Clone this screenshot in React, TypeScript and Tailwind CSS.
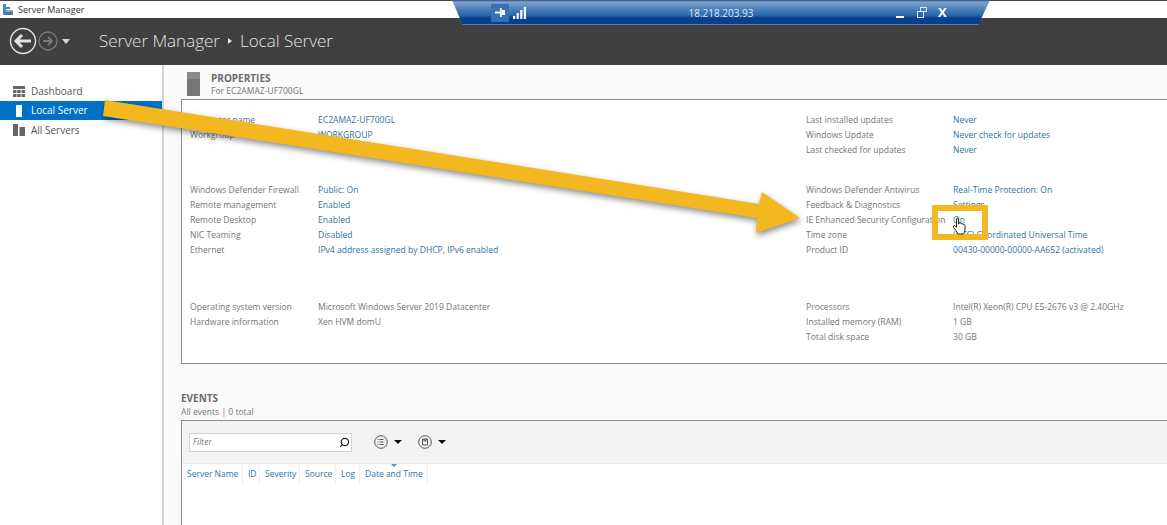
import { Search } from 'lucide-react';

const font = 'font-["Open_Sans","Noto_Sans",sans-serif]';

type Row = { label: string; value: string; plain?: boolean };

const leftGroups: Row[][] = [
  [
    { label: 'Computer name', value: 'EC2AMAZ-UF700GL' },
    { label: 'Workgroup', value: 'WORKGROUP' },
  ],
  [
    { label: 'Windows Defender Firewall', value: 'Public: On' },
    { label: 'Remote management', value: 'Enabled' },
    { label: 'Remote Desktop', value: 'Enabled' },
    { label: 'NIC Teaming', value: 'Disabled' },
    { label: 'Ethernet', value: 'IPv4 address assigned by DHCP, IPv6 enabled' },
  ],
  [
    { label: 'Operating system version', value: 'Microsoft Windows Server 2019 Datacenter', plain: true },
    { label: 'Hardware information', value: 'Xen HVM domU', plain: true },
  ],
];

const rightGroups: Row[][] = [
  [
    { label: 'Last installed updates', value: 'Never' },
    { label: 'Windows Update', value: 'Never check for updates' },
    { label: 'Last checked for updates', value: 'Never' },
  ],
  [
    { label: 'Windows Defender Antivirus', value: 'Real-Time Protection: On' },
    { label: 'Feedback & Diagnostics', value: 'Settings' },
    { label: 'IE Enhanced Security Configuration', value: 'On' },
    { label: 'Time zone', value: '(UTC) Coordinated Universal Time' },
    { label: 'Product ID', value: '00430-00000-00000-AA652 (activated)' },
  ],
  [
    { label: 'Processors', value: 'Intel(R) Xeon(R) CPU E5-2676 v3 @ 2.40GHz', plain: true },
    { label: 'Installed memory (RAM)', value: '1 GB', plain: true },
    { label: 'Total disk space', value: '30 GB', plain: true },
  ],
];

function PropertyColumn({ groups, labelWidth, firstGap, secondGap, className }: {
  groups: Row[][]; labelWidth: string; firstGap: string; secondGap: string; className: string;
}) {
  return (
    <div className={className}>
      {groups.map((group, i) => (
        <div key={i} className={i === 1 ? firstGap : i === 2 ? secondGap : ''}>
          {group.map((row) => (
            <div key={row.label} className="flex h-[15px] items-center text-[8.55px] whitespace-nowrap">
              <span className={`${labelWidth} shrink-0 text-[#757575]`}>{row.label}</span>
              <span className={row.plain ? 'text-[#757575]' : 'text-[#2f739f]'}>{row.value}</span>
            </div>
          ))}
        </div>
      ))}
    </div>
  );
}

function DashboardIcon() {
  return (
    <svg width="12" height="11" viewBox="0 0 12 11" fill="#666">
      <rect width="12" height="3" />
      <rect y="4" width="3.5" height="3" /><rect x="4.2" y="4" width="3.5" height="3" /><rect x="8.5" y="4" width="3.5" height="3" />
      <rect y="8" width="3.5" height="3" /><rect x="4.2" y="8" width="3.5" height="3" /><rect x="8.5" y="8" width="3.5" height="3" />
    </svg>
  );
}

function ColumnHeader({ label, width }: { label: string; width: string }) {
  return (
    <div className={`${width} flex h-[21px] items-center border-r border-[#eeeeee] pl-[5px] whitespace-nowrap`}>
      {label}
    </div>
  );
}

export default function App() {
  return (
    <div className={`${font} relative flex h-[525px] w-[1167px] flex-col overflow-hidden bg-white`}>
      {/* window title */}
      <div className="flex h-[18px] shrink-0 items-center gap-[5px] border-t border-[#444] pl-[3px] text-[9px] text-[#333]">
        <svg width="10" height="11" viewBox="0 0 10 11">
          <rect x="0" y="0" width="3" height="11" fill="#3d8ccb" />
          <rect x="3" y="3" width="4" height="2" fill="#3d8ccb" />
          <rect x="3" y="6" width="7" height="2" fill="#8fa6b8" />
          <rect x="3" y="8" width="7" height="3" fill="#5f7486" />
        </svg>
        Server Manager
      </div>

      {/* dark header */}
      <div className="flex h-[47px] shrink-0 items-center bg-[#404040] pb-[1px] pl-[9px]">
        <svg width="28" height="28" viewBox="0 0 28 28" fill="none" stroke="#e2e2e2">
          <circle cx="14" cy="14" r="12.5" strokeWidth="1.4" />
          <path d="M22 14H7M13 8l-6 6 6 6" strokeWidth="3" />
        </svg>
        <svg className="ml-px" width="20" height="20" viewBox="0 0 20 20" fill="none" stroke="#7a7a7a">
          <circle cx="10" cy="10" r="9" strokeWidth="1.3" />
          <path d="M5 10h9M10 6l4 4-4 4" strokeWidth="1.8" />
        </svg>
        <div className="ml-[4px] h-0 w-0 border-x-[4px] border-t-[5px] border-x-transparent border-t-[#d8d8d8]" />
        <div className="ml-[29px] flex items-center text-[17px] font-light text-[#e4e4e4]">
          Server Manager
          <span className="mx-[8px] h-0 w-0 border-y-[3px] border-l-[4px] border-y-transparent border-l-[#e4e4e4]" />
          Local Server
        </div>
      </div>

      <div className="flex min-h-0 flex-1">
        {/* sidebar */}
        <div className="w-[164px] shrink-0 border-r-2 border-[#d4d4d4] pt-[16px] text-[10px] text-[#555]">
          <div className="flex h-[20px] items-center gap-[6px] pl-[13px]">
            <DashboardIcon />
            Dashboard
          </div>
          <div className="flex h-[19px] items-center gap-[6px] bg-[#0072c6] pl-[13px] text-white">
            <div className="mx-[3px] h-[12px] w-[6px] bg-white" />
            Local Server
          </div>
          <div className="flex h-[20px] items-center gap-[6px] pl-[13px]">
            <svg width="12" height="12" viewBox="0 0 12 12" fill="#666">
              <rect y="0" width="5" height="12" />
              <rect x="6.500" y="3" width="5.500" height="9" />
            </svg>
            All Servers
          </div>
        </div>

        {/* main column */}
        <div className="flex min-w-0 flex-1 flex-col bg-[#fafafa] pl-[17px]">
          <div className="flex h-[34px] shrink-0 items-start pt-[7px] pl-[6px]">
            <svg width="13" height="24" viewBox="0 0 13 24">
              <rect width="13" height="24" fill="#777777" />
              <rect width="13" height="7" fill="#8a8a8a" />
            </svg>
            <div className="ml-[11px]">
              <div className="text-[10px] leading-[13px] font-bold text-[#6a6a6a]">PROPERTIES</div>
              <div className="text-[8.55px] leading-[13px] text-[#757575]">For EC2AMAZ-UF700GL</div>
            </div>
          </div>

          <div className="flex h-[265px] shrink-0 border-y border-l border-[#8c8c8c] bg-white pt-[13px]">
            <PropertyColumn
              groups={leftGroups}
              labelWidth="w-[128px]"
              firstGap="mt-[40px]"
              secondGap="mt-[42px]"
              className="ml-[8px] w-[616px]"
            />
            <PropertyColumn
              groups={rightGroups}
              labelWidth="w-[147px]"
              firstGap="mt-[25px]"
              secondGap="mt-[42px]"
              className=""
            />
          </div>

          <div className="shrink-0 pt-[28px]">
            <div className="text-[10px] leading-[13px] font-bold text-[#6a6a6a]">EVENTS</div>
            <div className="text-[8.55px] leading-[14px] text-[#757575]">All events | 0 total</div>
          </div>

          <div className="mt-[1px] flex min-h-0 flex-1 flex-col border-t border-l border-[#8c8c8c] bg-white">
            <div className="flex h-[42px] shrink-0 items-center bg-[#f3f3f3] pl-[7px]">
              <div className="flex h-[19px] w-[163px] items-center justify-between border border-[#d2d2d2] bg-white pr-px pl-[3px] text-[8.5px] text-[#777] italic">
                Filter
                <Search size={11} strokeWidth={2.6} className="-scale-x-100 text-[#222]" />
              </div>
              <svg className="ml-[22px]" width="14" height="14" viewBox="0 0 14 14" fill="none" stroke="#555">
                <circle cx="7" cy="7" r="6.3" />
                <path d="M5.5 4.500h4M5.500 7h4M5.500 9.500h4M3.500 4.500h1M3.500 7h1M3.500 9.500h1" />
              </svg>
              <div className="ml-[6px] h-0 w-0 border-x-[4px] border-t-[4px] border-x-transparent border-t-[#111]" />
              <svg className="ml-[16px]" width="14" height="14" viewBox="0 0 14 14" fill="none" stroke="#555">
                <circle cx="7" cy="7" r="6.3" />
                <path d="M4.500 4v6h5V4zM6 4v2h2V4" />
              </svg>
              <div className="ml-[6px] h-0 w-0 border-x-[4px] border-t-[4px] border-x-transparent border-t-[#111]" />
            </div>
            <div className="relative flex shrink-0 border-t border-[#e8e8e8] text-[8.5px] text-[#2f739f]">
              <ColumnHeader label="Server Name" width="w-[61px]" />
              <ColumnHeader label="ID" width="w-[17px]" />
              <ColumnHeader label="Severity" width="w-[40px]" />
              <ColumnHeader label="Source" width="w-[36px]" />
              <ColumnHeader label="Log" width="w-[24px]" />
              <ColumnHeader label="Date and Time" width="w-[68px]" />
              <div className="absolute top-0 left-[209px] h-0 w-0 border-x-[3px] border-t-[3px] border-x-transparent border-t-[#4a90c2]" />
            </div>
          </div>
        </div>
      </div>

      {/* remote desktop connection bar */}
      <div className="absolute top-0 left-[452px] flex h-[25px] w-[538px] items-center bg-[linear-gradient(#33507a_0,#7fa3cf_8%,#3f76b6_45%,#2a64a8_62%,#0b3f8e_72%,#0b3f8e_94%,#7d9cc4_100%)] text-[10px] text-[#dfe9f5] [clip-path:polygon(0_0,100%_0,97.8%_100%,2%_100%)]">
        <div className="ml-[39px] flex h-[18px] w-[18px] items-center justify-center bg-[#3a70b0]">
          <svg width="10" height="9" viewBox="0 0 10 9" fill="#fff">
            <rect y="3.500" width="6" height="2" />
            <rect x="5" y="0" width="1.600" height="9" />
            <rect x="6.600" y="2" width="3.400" height="5" />
          </svg>
        </div>
        <svg className="ml-[4px]" width="13" height="12" viewBox="0 0 13 12" fill="#fff">
          <rect y="9" width="2.200" height="3" /><rect x="3.600" y="6" width="2.200" height="6" /><rect x="7.200" y="3" width="2.200" height="9" /><rect x="10.800" y="0" width="2.200" height="12" />
        </svg>
        <div className="mt-[1px] ml-[160px] w-[70px] text-center">18.218.203.93</div>
        <div className="mt-[8px] ml-[140px] h-[2px] w-[8px] bg-white" />
        <svg className="ml-[13px]" width="10" height="11" viewBox="0 0 10 11" fill="none" stroke="#dfe9f5">
          <rect x="3.500" y="0.500" width="6" height="4" />
          <rect x="0.500" y="4.500" width="6" height="6" />
        </svg>
        <div className="ml-[11px] text-[13px] leading-none font-bold text-white">X</div>
      </div>

      {/* tutorial arrow, drawn over the window */}
      <svg className="absolute top-0 left-0 drop-shadow-[1px_3px_3px_rgba(0,0,0,0.45)]" width="1167" height="525" viewBox="0 0 1167 525">
        <polygon points="105,100 759,204 762,192 800,218 756,233 757,218 103,116" fill="#f3b81f" />
      </svg>

      {/* highlight around the setting */}
      <div className="absolute top-[205px] left-[932px] h-[35px] w-[56px] border-[6px] border-[#f3b81f]" />
      <svg className="absolute top-[217px] left-[952px]" width="16" height="18" viewBox="0 0 16 18" fill="#fff" stroke="#222" strokeWidth="1">
        <path d="M4.500 1.500c1-1 2-.5 2 .5v5h.5V6c1-1 2-.5 2 .5V7c1-.7 2-.3 2 .5 1-.5 2 0 2 1v4c0 2-1 4-2 4.500H6C5 15 3 12.500 1.500 10c-.5-1.200.8-2 1.800-1l1.200 1.300z" />
      </svg>
    </div>
  );
}
